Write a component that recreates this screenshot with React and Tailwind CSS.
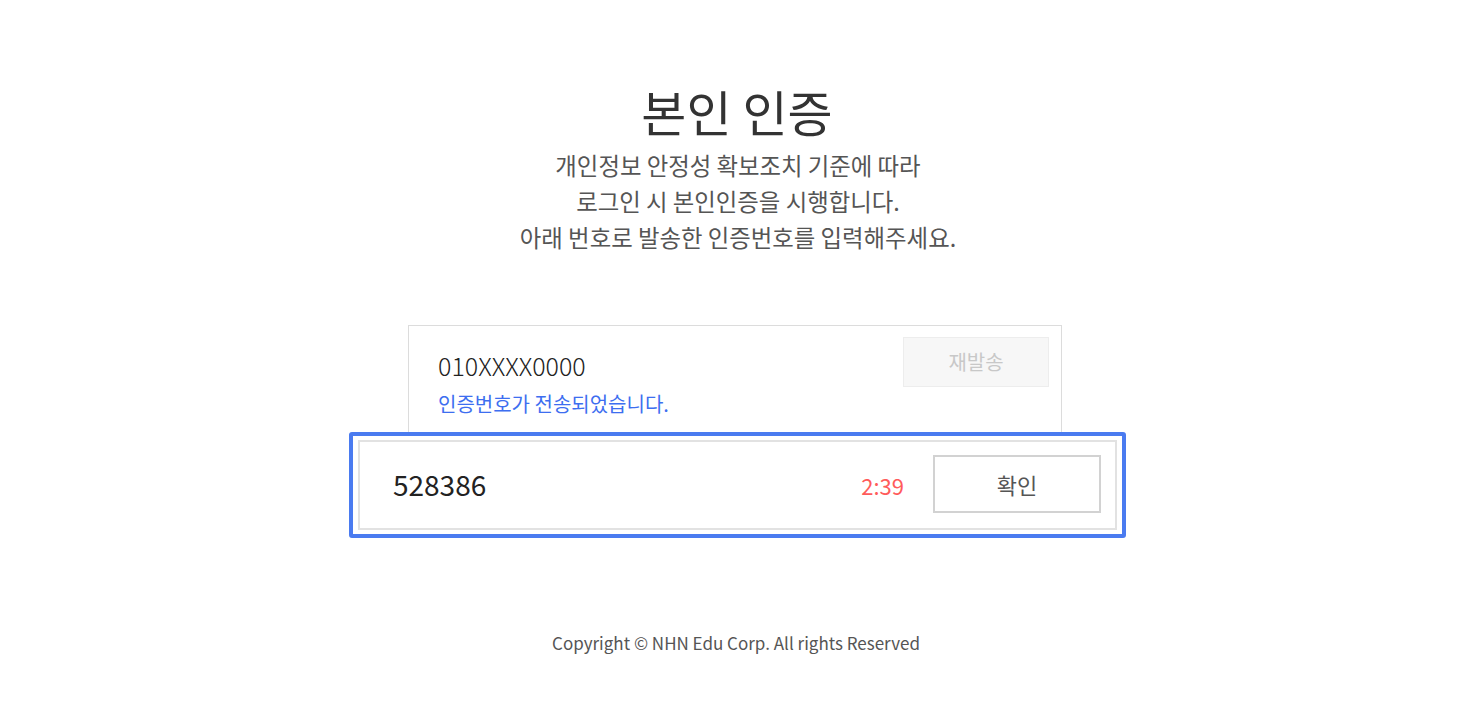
export default function App() {
  return (
    <div className="min-h-screen bg-white flex flex-col items-center font-['Noto_Sans_CJK_KR',sans-serif]">
      {/* Heading */}
      <h1 className="mt-[84px] mr-[2px] text-[49px] leading-[54px] font-normal text-[#333]">본인 인증</h1>
      <p className="mt-[9px] text-[23.4px] leading-[36px] text-[#555] text-center">
        개인정보 안정성 확보조치 기준에 따라
        <br />
        로그인 시 본인인증을 시행합니다.
        <br />
        아래 번호로 발송한 인증번호를 입력해주세요.
      </p>

      {/* Phone box */}
      <div className="mt-[70px] mr-[6px] w-[654px] h-[107px] border border-b-0 border-[#dcdcdc] flex items-start justify-between pl-[29px] pr-[12px] pt-[11px]">
        <div className="pt-[13px]">
          <div className="text-[25px] leading-[30px] font-light text-[#222]">010XXXX0000</div>
          <div className="mt-[11px] text-[20px] leading-[26px] text-[#3d6ef0]">인증번호가 전송되었습니다.</div>
        </div>
        <button className="w-[146px] h-[50px] bg-[#f7f7f7] border border-[#ededed] text-[20px] text-[#c8c8c8]">
          재발송
        </button>
      </div>

      {/* Code input, highlighted */}
      <div className="w-[777px] mr-[1px] border-4 border-[#4a7bf0] rounded-[3px] px-[5px] py-[4px]">
        <div className="h-[90px] border-2 border-[#e2e2e2] flex items-center pl-[33px] pr-[14px]">
          <span className="flex-1 text-[28px] leading-[36px] text-[#222] -mt-[2px]">528386</span>
          <span className="text-[22px] text-[#ff5b5b] mr-[29px]">2:39</span>
          <button className="w-[168px] h-[58px] -mt-[2px] border-2 border-[#d2d2d2] bg-white text-[22px] text-[#555]">
            확인
          </button>
        </div>
      </div>

      <footer className="mt-[93px] mr-[4px] text-[17px] leading-[24px] text-[#555]">
        Copyright © NHN Edu Corp. All rights Reserved
      </footer>
    </div>
  );
}
